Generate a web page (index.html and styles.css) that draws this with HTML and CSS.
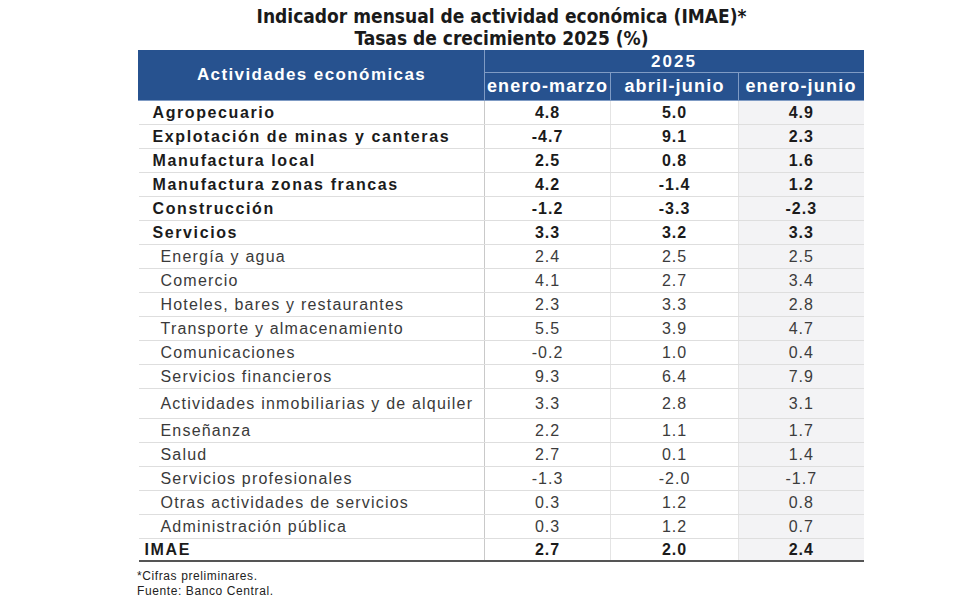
FILE: index.html
```html
<!DOCTYPE html>
<html lang="es">
<head>
<meta charset="utf-8">
<title>IMAE</title>
<link rel="stylesheet" href="styles.css">
</head>
<body>
<div class="wrap">
  <h1 class="title">Indicador mensual de actividad económica (IMAE)*<br>Tasas de crecimiento 2025 (%)</h1>
  <table class="tbl">
    <colgroup>
      <col class="c1"><col class="c2"><col class="c3"><col class="c4">
    </colgroup>
    <thead>
      <tr class="h1">
        <th rowspan="2" class="act">Actividades económicas</th>
        <th colspan="3" class="year">2025</th>
      </tr>
      <tr class="h2">
        <th>enero-marzo</th>
        <th>abril-junio</th>
        <th class="last">enero-junio</th>
      </tr>
    </thead>
    <tbody>
      <tr class="b"><td class="n">Agropecuario</td><td>4.8</td><td>5.0</td><td class="s">4.9</td></tr>
      <tr class="b"><td class="n">Explotación de minas y canteras</td><td>-4.7</td><td>9.1</td><td class="s">2.3</td></tr>
      <tr class="b"><td class="n">Manufactura local</td><td>2.5</td><td>0.8</td><td class="s">1.6</td></tr>
      <tr class="b"><td class="n">Manufactura zonas francas</td><td>4.2</td><td>-1.4</td><td class="s">1.2</td></tr>
      <tr class="b"><td class="n">Construcción</td><td>-1.2</td><td>-3.3</td><td class="s">-2.3</td></tr>
      <tr class="b"><td class="n">Servicios</td><td>3.3</td><td>3.2</td><td class="s">3.3</td></tr>
      <tr><td class="n sub">Energía y agua</td><td>2.4</td><td>2.5</td><td class="s">2.5</td></tr>
      <tr><td class="n sub">Comercio</td><td>4.1</td><td>2.7</td><td class="s">3.4</td></tr>
      <tr><td class="n sub">Hoteles, bares y restaurantes</td><td>2.3</td><td>3.3</td><td class="s">2.8</td></tr>
      <tr><td class="n sub">Transporte y almacenamiento</td><td>5.5</td><td>3.9</td><td class="s">4.7</td></tr>
      <tr><td class="n sub">Comunicaciones</td><td>-0.2</td><td>1.0</td><td class="s">0.4</td></tr>
      <tr><td class="n sub">Servicios financieros</td><td>9.3</td><td>6.4</td><td class="s">7.9</td></tr>
      <tr class="tall"><td class="n sub">Actividades inmobiliarias y de alquiler</td><td>3.3</td><td>2.8</td><td class="s">3.1</td></tr>
      <tr><td class="n sub">Enseñanza</td><td>2.2</td><td>1.1</td><td class="s">1.7</td></tr>
      <tr><td class="n sub">Salud</td><td>2.7</td><td>0.1</td><td class="s">1.4</td></tr>
      <tr><td class="n sub">Servicios profesionales</td><td>-1.3</td><td>-2.0</td><td class="s">-1.7</td></tr>
      <tr><td class="n sub">Otras actividades de servicios</td><td>0.3</td><td>1.2</td><td class="s">0.8</td></tr>
      <tr><td class="n sub">Administración pública</td><td>0.3</td><td>1.2</td><td class="s">0.7</td></tr>
      <tr class="b total"><td class="n tot">IMAE</td><td>2.7</td><td>2.0</td><td class="s">2.4</td></tr>
    </tbody>
  </table>
  <div class="notes">
    <div>*Cifras preliminares.</div>
    <div>Fuente: Banco Central.</div>
  </div>
</div>
</body>
</html>
```

FILE: styles.css
```css
html, body {
  margin: 0;
  padding: 0;
  background: #ffffff;
}
body {
  font-family: "Liberation Sans", Arial, sans-serif;
  color: #222;
}
.wrap {
  width: 725px;
  margin-left: 138px;
  padding-top: 5px;
}
.title {
  margin: 0 0 1px 0;
  text-align: center;
  font-family: "Liberation Sans Narrow", "DejaVu Sans Condensed", "Liberation Sans", sans-serif;
  font-stretch: condensed;
  font-weight: bold;
  font-size: 19px;
  line-height: 22px;
  color: #1a1a1a;
  transform: translateX(1px);
}
.tbl {
  width: 725px;
  border-collapse: collapse;
  table-layout: fixed;
  font-size: 16px;
}
.c1 { width: 346px; }
.c2 { width: 126px; }
.c3 { width: 128px; }
.c4 { width: 125px; }
thead th {
  background: #27528f;
  color: #ffffff;
  font-weight: bold;
  padding: 0;
  border: 1px solid #7f9bc4;
  letter-spacing: 1.2px;
}
thead tr.h1 th { border-top-color: #27528f; }
thead th.act {
  border-left-color: #27528f;
  font-size: 17px;
  letter-spacing: 1.4px;
  padding-bottom: 2px;
}
thead th.last { border-right-color: #27528f; }
thead th.year { border-right-color: #27528f; }
.h1 th.year { height: 21px; font-size: 17px; letter-spacing: 2px; }
.h2 th { height: 27px; font-size: 18px; }
tbody td {
  height: 22px;
  padding: 1px 0 0 0;
  text-align: center;
  border-bottom: 1px solid #dedede;
  border-left: 1px solid #e4e4e4;
  color: #3c3c3c;
  letter-spacing: 1px;
  font-size: 16px;
}
tbody tr.tall td { height: 28px; }
tbody td.s { background: #f3f3f5; }
tbody td.n {
  text-align: left;
  padding-left: 14px;
  border-left: none;
  border-right: 1px solid #c9c9c9;
  letter-spacing: 1.2px;
  white-space: nowrap;
}
tbody td.sub { padding-left: 22px; color: #3a3a3a; }
tbody tr.b td {
  font-weight: bold;
  color: #1b1b1b;
}
tbody tr.b td.n { letter-spacing: 1.6px; }
tbody td.tot { padding-left: 6px; }
tbody tr.total td {
  height: 20px;
  border-bottom: 2px solid #555;
}
.notes {
  margin-top: 7px;
  margin-left: -1px;
  font-size: 12px;
  line-height: 15px;
  color: #222;
  letter-spacing: 0.6px;
}
```
